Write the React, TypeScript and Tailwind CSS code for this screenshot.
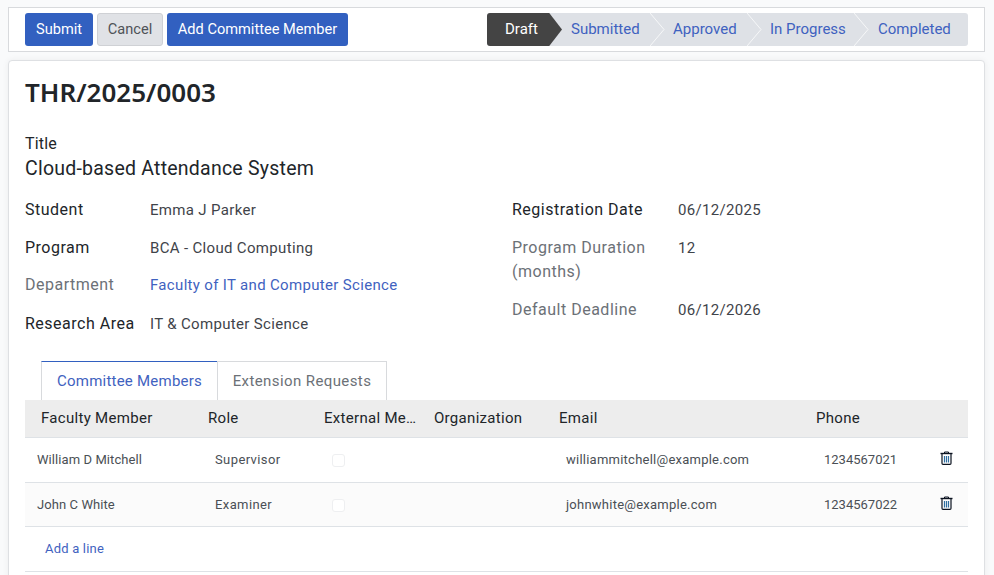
const F = "font-['Roboto',sans-serif]";

function Trash() {
  return (
    <svg width="13" height="14" viewBox="0 0 13 14" fill="none">
      <path d="M4.5 2V1h4v1" stroke="#0b1320" strokeWidth="1" />
      <path d="M0.5 2.5h12" stroke="#0b1320" strokeWidth="1.4" />
      <path d="M2 3v9.2c0 .7.4 1.1 1 1.1h7c.6 0 1-.4 1-1.1V3" stroke="#0b1320" strokeWidth="1.2" />
      <path d="M4.5 5v6.5M6.5 5v6.5M8.5 5v6.5" stroke="#2f6ea0" strokeWidth="1.2" />
    </svg>
  );
}

function Row({ name, role, email, phone, alt }: { name: string; role: string; email: string; phone: string; alt?: boolean }) {
  return (
    <div className={`grid grid-cols-[167px_116px_110px_125px_257px_124px_1fr] items-center pl-4 border-b border-[#dee2e6] text-[13px] text-[#4a4f55] ${alt ? "h-[44px] pt-px bg-[#fbfbfb]" : "h-[45px] bg-white"}`}>
      <div className="-ml-1 tracking-[0.08px]">{name}</div>
      <div className="ml-[7px] tracking-[0.4px]">{role}</div>
      <div className="ml-2">
        <div className="w-[13px] h-[13px] rounded-[3px] border border-[#eeeff1] bg-white" />
      </div>
      <div />
      <div className="ml-[7px] tracking-[0.24px]">{email}</div>
      <div className="ml-2">{phone}</div>
      <div className="-mt-[5px] flex"><Trash /></div>
    </div>
  );
}

function Field({ label, muted, children, w, top }: { label: string; muted?: boolean; children: React.ReactNode; w: string; top?: boolean }) {
  return (
    <div className={`flex ${top ? "mt-px" : ""}`}>
      <div className={`${w} shrink-0 text-[16px] leading-[24px] tracking-[0.5px] ${muted ? "text-[#6c7177]" : "text-[#212529]"}`}>{label}</div>
      <div className="text-[15px] leading-[24px] tracking-[0.33px] text-[#3f444a]">{children}</div>
    </div>
  );
}

export default function App() {
  return (
    <div className={`${F} w-[994px] h-[575px] overflow-hidden bg-[#f9fafb] pt-[7px] px-2`}>
      <div className="h-[45px] w-[977px] bg-white border border-[#d8dadd] flex items-center justify-between pl-4 pr-4">
        <div className="flex gap-1 text-[14.6px]">
          <button className="h-[33px] w-[68px] rounded-[3px] bg-[#3260c0] text-white">Submit</button>
          <button className="h-[33px] w-[66px] rounded-[3px] bg-[#e0e2e6] border border-[#cfd1d5] text-[#4f5358]">Cancel</button>
          <button className="h-[33px] w-[181px] rounded-[3px] bg-[#3260c0] text-white">Add Committee Member</button>
        </div>
        <div className="relative flex h-[33px] w-[481px] rounded-[3px] bg-[#dee1e6] text-[15px] text-[#3f62c0] overflow-hidden">
          <div className="w-[75px] shrink-0 bg-[#444444] text-white flex items-center pl-[18px] [clip-path:polygon(0_0,83%_0,100%_50%,83%_100%,0_100%)]">Draft</div>
          <div className="absolute left-[84px] top-0 h-full flex items-center">Submitted</div>
          <div className="absolute left-[186px] top-0 h-full flex items-center">Approved</div>
          <div className="absolute left-[283px] top-0 h-full flex items-center">In Progress</div>
          <div className="absolute left-[391px] top-0 h-full flex items-center">Completed</div>
          <svg className="absolute left-[163px] top-0" width="16" height="33" fill="none" stroke="#f6f7f8" strokeWidth="1"><path d="M0 0 L14 16.5 L0 33" /></svg>
          <svg className="absolute left-[260px] top-0" width="16" height="33" fill="none" stroke="#f6f7f8" strokeWidth="1"><path d="M0 0 L14 16.5 L0 33" /></svg>
          <svg className="absolute left-[367px] top-0" width="16" height="33" fill="none" stroke="#f6f7f8" strokeWidth="1"><path d="M0 0 L14 16.5 L0 33" /></svg>
        </div>
      </div>

      <div className="mt-2 w-[977px] h-[600px] bg-white border border-[#dee0e3] rounded-[4px] shadow-[0_0_6px_rgba(0,0,0,0.06)] px-4 pt-[13px]">
        <div className="font-['Noto_Sans',sans-serif] font-semibold text-[26px] leading-[36px] text-[#212529]">THR/2025/0003</div>
        <div className="mt-[24px] text-[16px] leading-[20px] tracking-[0.2px] text-[#212529]">Title</div>
        <div className="text-[19.5px] leading-[28px] tracking-[0.23px] text-[#212529] mt-px">Cloud-based Attendance System</div>

        <div className="mt-[15px] flex h-[137px]">
          <div className="w-[487px] flex flex-col gap-[13.5px]">
            <Field w="w-[125px]" label="Student">Emma J Parker</Field>
            <Field w="w-[125px]" label="Program">BCA - Cloud Computing</Field>
            <Field w="w-[125px]" label="Department" muted><span className="text-[#3f62c0]">Faculty of IT and Computer Science</span></Field>
            <Field w="w-[125px]" label="Research Area" top>IT &amp; Computer Science</Field>
          </div>
          <div className="flex flex-col gap-[14px]">
            <Field w="w-[166px]" label="Registration Date">06/12/2025</Field>
            <Field w="w-[166px]" label="Program Duration (months)" muted>12</Field>
            <Field w="w-[166px]" label="Default Deadline" muted>06/12/2026</Field>
          </div>
        </div>

        <div className="mt-[26px] pl-4 flex h-[39px] text-[15px]">
          <div className="w-[177px] pt-px bg-white border border-[#d8dadd] border-t-[#3260c0] border-b-0 flex items-center justify-center tracking-[0.23px] text-[#3f62c0]">Committee Members</div>
          <div className="w-[170px] pt-px -ml-px bg-white border border-[#d8dadd] border-b-0 flex items-center justify-center tracking-[0.4px] text-[#6c7177]">Extension Requests</div>
        </div>

        <div className="w-[943px]">
          <div className="grid grid-cols-[167px_116px_110px_125px_257px_1fr] h-[38px] items-center pl-4 bg-[#ededed] border-b border-[#dee2e6] text-[15px] tracking-[0.3px] text-[#212529]">
            <div>Faculty Member</div>
            <div>Role</div>
            <div className="truncate pr-2">External Member</div>
            <div>Organization</div>
            <div>Email</div>
            <div>Phone</div>
          </div>
          <Row name="William D Mitchell" role="Supervisor" email="williammitchell@example.com" phone="1234567021" />
          <Row alt name="John C White" role="Examiner" email="johnwhite@example.com" phone="1234567022" />
          <div className="h-[45px] border-b border-[#dee2e6] flex items-center pl-5 text-[13px] tracking-[0.2px] text-[#3f62c0]">Add a line</div>
        </div>
      </div>
    </div>
  );
}
